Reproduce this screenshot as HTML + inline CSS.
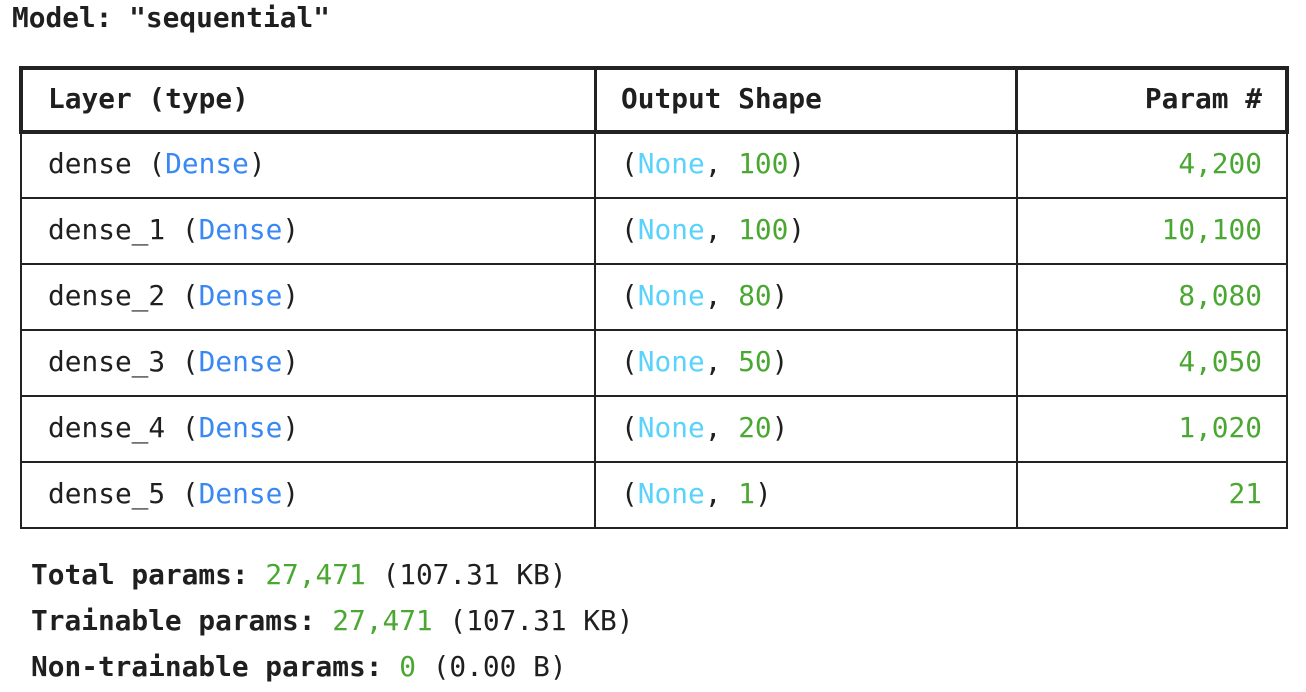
<!DOCTYPE html>
<html><head><meta charset="utf-8"><style>
body{margin:0;width:1306px;height:692px;background:#fff;position:relative;overflow:hidden;font-family:"DejaVu Sans Mono","Liberation Mono",monospace;font-size:27.8px;color:#1f1f1f}
.t{position:absolute;white-space:pre;line-height:32px}
.b{font-weight:bold}
.h{position:absolute;background:#222}
.bl{color:#3a88f4}.cy{color:#5ad3fc}.gr{color:#4aa832}
.r{text-align:right;width:300px}
</style></head><body>
<div class="t b" style="left:12px;top:2px">Model: "sequential"</div>
<div class="h" style="left:19px;top:66px;width:1270px;height:4px"></div>
<div class="h" style="left:19px;top:130px;width:1270px;height:4px"></div>
<div class="h" style="left:19px;top:66px;width:4px;height:68px"></div>
<div class="h" style="left:1285px;top:66px;width:4px;height:68px"></div>
<div class="h" style="left:594px;top:66px;width:3px;height:68px"></div>
<div class="h" style="left:1015px;top:66px;width:3px;height:68px"></div>
<div class="h" style="left:20px;top:134px;width:2px;height:395px"></div>
<div class="h" style="left:1286px;top:134px;width:2px;height:395px"></div>
<div class="h" style="left:594px;top:134px;width:2px;height:395px"></div>
<div class="h" style="left:1016px;top:134px;width:2px;height:395px"></div>
<div class="h" style="left:20px;top:197px;width:1268px;height:2px"></div>
<div class="h" style="left:20px;top:263px;width:1268px;height:2px"></div>
<div class="h" style="left:20px;top:329px;width:1268px;height:2px"></div>
<div class="h" style="left:20px;top:395px;width:1268px;height:2px"></div>
<div class="h" style="left:20px;top:461px;width:1268px;height:2px"></div>
<div class="h" style="left:20px;top:527px;width:1268px;height:2px"></div>

<div class="t b" style="left:48px;top:83px">Layer (type)</div>
<div class="t b" style="left:621px;top:83px">Output Shape</div>
<div class="t b r" style="left:962px;top:83px">Param #</div>

<div class="t" style="left:48px;top:148px">dense (<span class="bl">Dense</span>)</div>
<div class="t" style="left:621px;top:148px">(<span class="cy">None</span>, <span class="gr">100</span>)</div>
<div class="t r gr" style="left:962px;top:148px">4,200</div>

<div class="t" style="left:48px;top:214px">dense_1 (<span class="bl">Dense</span>)</div>
<div class="t" style="left:621px;top:214px">(<span class="cy">None</span>, <span class="gr">100</span>)</div>
<div class="t r gr" style="left:962px;top:214px">10,100</div>

<div class="t" style="left:48px;top:280px">dense_2 (<span class="bl">Dense</span>)</div>
<div class="t" style="left:621px;top:280px">(<span class="cy">None</span>, <span class="gr">80</span>)</div>
<div class="t r gr" style="left:962px;top:280px">8,080</div>

<div class="t" style="left:48px;top:346px">dense_3 (<span class="bl">Dense</span>)</div>
<div class="t" style="left:621px;top:346px">(<span class="cy">None</span>, <span class="gr">50</span>)</div>
<div class="t r gr" style="left:962px;top:346px">4,050</div>

<div class="t" style="left:48px;top:412px">dense_4 (<span class="bl">Dense</span>)</div>
<div class="t" style="left:621px;top:412px">(<span class="cy">None</span>, <span class="gr">20</span>)</div>
<div class="t r gr" style="left:962px;top:412px">1,020</div>

<div class="t" style="left:48px;top:478px">dense_5 (<span class="bl">Dense</span>)</div>
<div class="t" style="left:621px;top:478px">(<span class="cy">None</span>, <span class="gr">1</span>)</div>
<div class="t r gr" style="left:962px;top:478px">21</div>

<div class="t" style="left:31px;top:559px"><b>Total params:</b> <span class="gr">27,471</span> (107.31 KB)</div>
<div class="t" style="left:31px;top:605px"><b>Trainable params:</b> <span class="gr">27,471</span> (107.31 KB)</div>
<div class="t" style="left:31px;top:651px"><b>Non-trainable params:</b> <span class="gr">0</span> (0.00 B)</div>
</body></html>
